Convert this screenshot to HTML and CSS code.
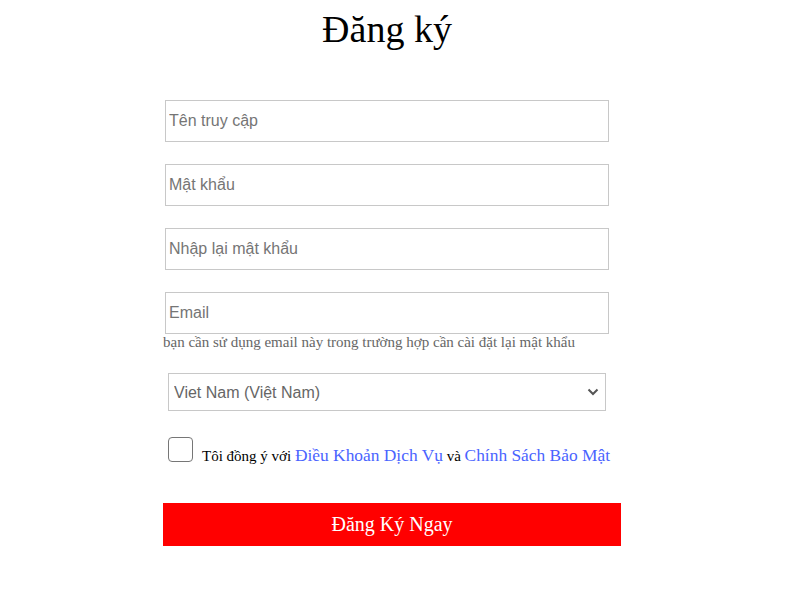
FILE: index.html
```html
<!DOCTYPE html>
<html lang="vi">
<head>
<meta charset="utf-8">
<link rel="stylesheet" href="styles.css">
</head>
<body>
<div class="page">
  <h1 class="title">Đăng ký</h1>
  <form class="form">
    <input class="field" type="text" placeholder="Tên truy cập">
    <input class="field" type="password" placeholder="Mật khẩu">
    <input class="field" type="password" placeholder="Nhập lại mật khẩu">
    <input class="field field-email" type="email" placeholder="Email">
    <p class="hint">bạn cần sử dụng email này trong trường hợp cần cài đặt lại mật khẩu</p>
    <div class="select-wrap">
      <select class="select">
        <option>Viet Nam (Việt Nam)</option>
      </select>
      <svg class="chev" width="12" height="8" viewBox="0 0 12 8"><path d="M1.5 1.5 L6 6 L10.5 1.5" fill="none" stroke="#555" stroke-width="2"/></svg>
    </div>
    <label class="agree">
      <input class="check" type="checkbox">
      <span class="agree-text">Tôi đồng ý với <a class="link" href="#">Điều Khoản Dịch Vụ</a> và <a class="link" href="#">Chính Sách Bảo Mật</a></span>
    </label>
    <button class="submit" type="button">Đăng Ký Ngay</button>
  </form>
</div>
</body>
</html>
```
FILE: styles.css
```css
html, body {
  margin: 0;
  padding: 0;
  background: #fff;
}
.page {
  padding-left: 163px;
  padding-top: 7px;
  font-family: "Liberation Serif", "Times New Roman", serif;
}
.title {
  width: 448px;
  margin: 0;
  font-size: 38px;
  font-weight: normal;
  line-height: 44px;
  text-align: center;
  color: #000;
}
.form {
  width: 458px;
  margin: 49px 0 0 0;
  display: flex;
  flex-direction: column;
  align-items: flex-start;
}
.field {
  box-sizing: border-box;
  width: 444px;
  height: 42px;
  margin: 0 0 22px 2px;
  padding: 0 3px;
  border: 1px solid #c8c8c8;
  font-family: "Liberation Sans", Arial, sans-serif;
  font-size: 16px;
  color: #333;
  outline: none;
}
.field::placeholder {
  color: #757575;
}
.field-email {
  margin-bottom: 0;
}
.hint {
  margin: 0;
  font-size: 15px;
  line-height: 17px;
  color: #666;
}
.select-wrap {
  position: relative;
  margin: 22px 0 0 5px;
}
.select {
  box-sizing: border-box;
  width: 438px;
  height: 38px;
  padding: 0 5px;
  border: 1px solid #c8c8c8;
  border-radius: 0;
  background: #fff;
  font-family: "Liberation Sans", Arial, sans-serif;
  font-size: 16px;
  color: #666;
  appearance: none;
  -webkit-appearance: none;
  outline: none;
}
.chev {
  position: absolute;
  right: 7px;
  top: 15px;
  pointer-events: none;
}
.agree {
  display: flex;
  align-items: flex-end;
  margin: 26px 0 0 5px;
}
.check {
  appearance: none;
  -webkit-appearance: none;
  box-sizing: border-box;
  width: 25px;
  height: 25px;
  margin: 0 9px 0 0;
  border: 1px solid #767676;
  border-radius: 4px;
  background: #fff;
}
.agree-text {
  font-size: 15px;
  line-height: 17px;
  color: #000;
  position: relative;
  top: 3px;
}
.link {
  font-size: 17.4px;
  color: #4a64ff;
  text-decoration: none;
}
.submit {
  box-sizing: border-box;
  width: 458px;
  height: 43px;
  margin-top: 41px;
  border: none;
  background: #ff0000;
  color: #fff;
  font-family: "Liberation Serif", "Times New Roman", serif;
  font-size: 20px;
  padding: 0;
}
```
